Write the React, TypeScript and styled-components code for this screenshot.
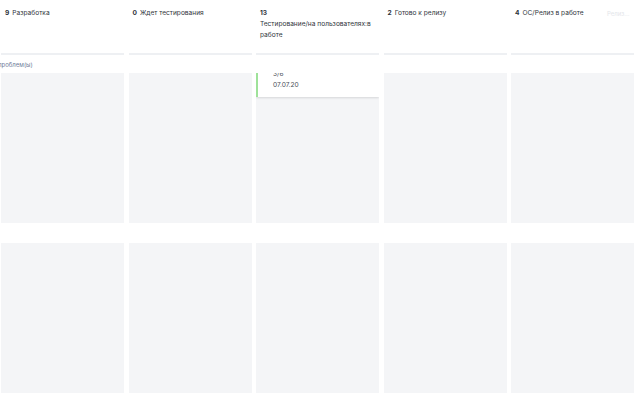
import React, { FC } from 'react';
import styled, { createGlobalStyle } from 'styled-components';

const GlobalStyle = createGlobalStyle`
  html, body {
    margin: 0;
    padding: 0;
    background: #ffffff;
  }
  body {
    font-family: Inter, "Noto Sans", sans-serif;
    color: #2b2f36;
    overflow: hidden;
  }
`;

type TColumn = {
    count: number
    title: string
}

const columns: TColumn[] = [
    {count: 9, title: 'Разработка'},
    {count: 0, title: 'Ждет тестирования'},
    {count: 13, title: 'Тестирование/на пользователях:в работе'},
    {count: 2, title: 'Готово к релизу'},
    {count: 4, title: 'ОС/Релиз в работе'},
];

const ColumnHeader: FC<{ column: TColumn }> = ({column}) => (
    <HeaderCell>
        <HeaderText>
            <Count>{column.count}</Count>
            <Title>{column.title}</Title>
        </HeaderText>
        <Separator/>
    </HeaderCell>
);

export default function App() {
    return (
        <>
            <GlobalStyle/>
            <Board>
                <HeaderRow>
                    {columns.map(c => <ColumnHeader key={c.title} column={c}/>)}
                    <FadedHint>Релиз...</FadedHint>
                </HeaderRow>

                <LaneLabel>проблем(ы)</LaneLabel>
                <Lane>
                    <Panel/>
                    <Panel/>
                    <Panel>
                        <Card>
                            <CardLine>3/6</CardLine>
                            <CardLine>07.07.20</CardLine>
                        </Card>
                    </Panel>
                    <Panel/>
                    <Panel/>
                </Lane>

                <LaneGap/>
                <Lane>
                    <Panel/>
                    <Panel/>
                    <Panel/>
                    <Panel/>
                    <Panel/>
                </Lane>
            </Board>
        </>
    );
}

const Board = styled.div`
  width: 640px;
  height: 400px;
  padding-left: 1px;
  box-sizing: border-box;
  overflow: hidden;
`

const HeaderRow = styled.div`
  position: relative;
  display: grid;
  grid-template-columns: repeat(5, 123px);
  column-gap: 4.5px;
`

const HeaderCell = styled.div`
  height: 55px;
  display: flex;
  flex-direction: column;
  justify-content: space-between;
`

const HeaderText = styled.div`
  display: flex;
  flex-wrap: wrap;
  column-gap: 3px;
  padding: 8px 2px 0 4px;
  font-size: 6.6px;
  line-height: 11px;
  color: #30343b;
`

const Count = styled.span`
  font-weight: 700;
`

const Title = styled.span`
  font-weight: 400;
`

const Separator = styled.div`
  height: 2px;
  background: #eef0f3;
`

const FadedHint = styled.span`
  position: absolute;
  top: 8px;
  left: 606px;
  font-size: 6px;
  line-height: 11px;
  color: #e4e6ea;
`

const LaneLabel = styled.div`
  height: 18px;
  font-size: 6px;
  line-height: 20px;
  color: #6f7d99;
  margin-left: -3px;
`

const LaneGap = styled.div`
  height: 20px;
`

const Lane = styled.div`
  display: grid;
  grid-template-columns: repeat(5, 123px);
  column-gap: 4.5px;
`

const Panel = styled.div`
  height: 150px;
  background: #f4f5f7;
  overflow: hidden;
`

const Card = styled.div`
  margin: -5px 0 0 0;
  padding: 1px 6px 6px 15px;
  background: #ffffff;
  border-left: 2px solid #9fe29a;
  box-shadow: 0 1px 2px rgba(0, 0, 0, 0.12);
`

const CardLine = styled.div`
  font-size: 6.6px;
  line-height: 11px;
  color: #4a4f57;
`
